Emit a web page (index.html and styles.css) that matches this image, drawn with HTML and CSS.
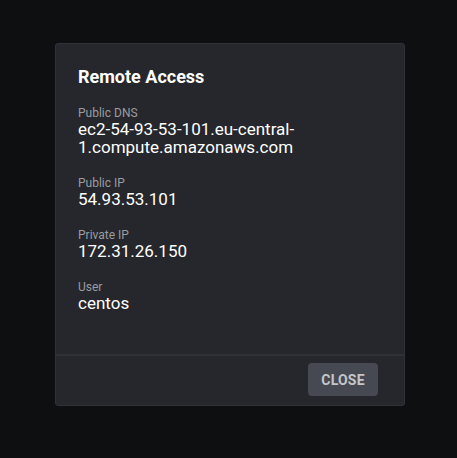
FILE: index.html
```html
<!DOCTYPE html>
<html>
<head>
<meta charset="utf-8">
<link rel="stylesheet" href="styles.css">
</head>
<body>
<div class="page">
  <div class="dialog">
    <div class="content">
      <h2 class="title">Remote Access</h2>
      <div class="field">
        <div class="label">Public DNS</div>
        <div class="value">ec2-54-93-53-101.eu-central-1.compute.amazonaws.com</div>
      </div>
      <div class="field">
        <div class="label">Public IP</div>
        <div class="value">54.93.53.101</div>
      </div>
      <div class="field">
        <div class="label">Private IP</div>
        <div class="value">172.31.26.150</div>
      </div>
      <div class="field">
        <div class="label">User</div>
        <div class="value">centos</div>
      </div>
    </div>
    <div class="actions">
      <button class="btn">CLOSE</button>
    </div>
  </div>
</div>
</body>
</html>
```
FILE: styles.css
```css
html, body {
  margin: 0;
  padding: 0;
  background: #0e0f11;
  font-family: Roboto, "Liberation Sans", sans-serif;
}
.page {
  width: 457px;
  height: 458px;
  padding-top: 43px;
  padding-left: 55px;
  box-sizing: border-box;
}
.dialog {
  width: 350px;
  height: 363px;
  box-sizing: border-box;
  background: #25272c;
  border: 1px solid #303237;
  border-radius: 3px;
  display: flex;
  flex-direction: column;
}
.content {
  flex: 1;
  padding: 22px 23px 0 22px;
}
.title {
  margin: 0 0 18px 0;
  font-size: 18px;
  font-weight: 700;
  line-height: 22px;
  color: #ffffff;
}
.field {
  margin-bottom: 20px;
}
.label {
  font-size: 12px;
  line-height: 14px;
  color: #9a9ca0;
}
.value {
  font-size: 17px;
  line-height: 18px;
  color: #ffffff;
  width: 250px;
}
.actions {
  border-top: 2px solid #2f3136;
  height: 51px;
  box-sizing: border-box;
  display: flex;
  justify-content: flex-end;
  align-items: flex-start;
  padding: 7px 26px 0 0;
}
.btn {
  width: 70px;
  height: 33px;
  border: none;
  border-radius: 4px;
  background: #464951;
  color: #c4c6ca;
  font-family: Roboto, "Liberation Sans", sans-serif;
  font-size: 14px;
  font-weight: 700;
  letter-spacing: 0.2px;
  padding: 0;
}
```
